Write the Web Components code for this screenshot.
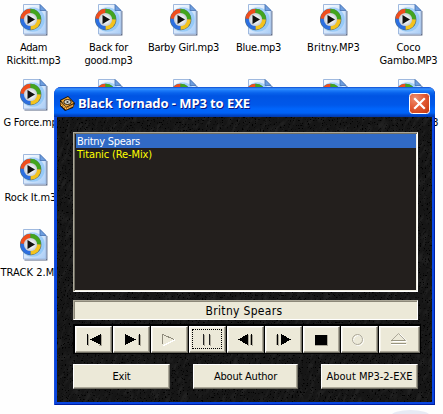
<!DOCTYPE html>
<html lang="en">
<head>
<meta charset="utf-8">
<title>Black Tornado - MP3 to EXE</title>
<style>
html,body{margin:0;height:100%;overflow:hidden;background:#fefefe}
body{font:11px/13px "DejaVu Sans Condensed","DejaVu Sans",sans-serif;color:#000}
</style>
</head>
<body>
<xp-desktop></xp-desktop>
<script>
const define=(name,html,setup)=>customElements.define(name,class extends HTMLElement{
  connectedCallback(){
    if(this.shadowRoot)return;
    const t=document.createElement('template');
    t.innerHTML=typeof html==='function'?html(this):html;
    this.attachShadow({mode:'open'}).append(t.content.cloneNode(true));
    if(setup)setup(this,this.shadowRoot);
  }
});

/* Text tracked to a given width in pixels */
define('fit-text','<style>:host{display:inline-block;white-space:nowrap}span{display:inline-block}</style><span><slot></slot></span>',(el,root)=>{
  const s=root.querySelector('span'),w=+el.getAttribute('w');
  if(!w)return;
  const n=el.textContent.length,natural=s.getBoundingClientRect().width;
  s.style.letterSpacing=((w-natural)/n)+'px';
});

define('mp3-file',`<style>
:host{display:flex;flex-direction:column;align-items:center;width:75px;height:75px;box-sizing:border-box;padding-top:4px;color:#000}
svg{display:block;flex:none}
.label{display:flex;flex-direction:column;align-items:center;padding-top:5px}
</style>
<svg width="30" height="32" viewBox="0.5 0 30 32">
<defs><linearGradient id="p" x1="0" y1="0" x2="1" y2="1"><stop offset="0" stop-color="#fbfdff"/><stop offset=".55" stop-color="#d3e5fb"/><stop offset="1" stop-color="#a9cdf6"/></linearGradient>
<radialGradient id="w"><stop offset=".3" stop-color="#fff"/><stop offset="1" stop-color="#c5cbd3"/></radialGradient></defs>
<path d="M6 31H28.3V7" fill="none" stroke="#53617f" stroke-width="1.2"/>
<path d="M5 .5H21.5L27.5 6.5V30H5Z" fill="url(#p)" stroke="#9fb9df"/>
<circle cx="14" cy="15.5" r="12.2" fill="#72bcf5" opacity=".55"/>
<path d="M21.5.5V6.5H27.5Z" fill="#6e9fe0" stroke="#456fae" stroke-width=".8"/>
<circle cx="12.2" cy="15.5" r="10.7" fill="#536b74"/>
<path d="M12 15V4.8A10.2 10.2 0 0 0 2 14.8Z" fill="#f04d1c"/>
<path d="M12 15V4.8A10.2 10.2 0 0 1 22.4 15.5Z" fill="#43a51e"/>
<path d="M12 15L2 14.8A10.2 10.2 0 0 0 12.2 25.7Z" fill="#2c6fe0"/>
<path d="M12 15L22.4 15.5A10.2 10.2 0 0 1 12.2 25.7Z" fill="#f5c31b"/>
<circle cx="12" cy="15.5" r="6.6" fill="url(#w)"/>
<path d="M9 11L16.5 15.5L9 20Z" fill="#111"/>
</svg><div class="label"><slot></slot></div>`);

const glyphs={
  prev:'<path d="M4 3h1v11H4zM18 3V14L7 8.5Z" fill="#000"/><path d="M5.5 4V14.5M18.5 4V14.5H16" stroke="#aca899" fill="none"/>',
  next:'<path d="M4 3V14L15 8.5ZM18 3h1v11h-1z" fill="#000"/><path d="M19.5 4V14.5M17.5 4V14" stroke="#aca899"/>',
  play:'<path d="M16.5 8.5L4.5 14.5" stroke="#fff" fill="none"/><path d="M3.5 13V3.5L15.5 8.5" stroke="#8f8b7c" fill="none"/>',
  pause:'<path d="M6 3h1v11H6zM12 3h1v11h-1z" fill="#222"/><path d="M7.5 3.5V14.5M13.5 3.5V14.5" stroke="#aca899"/>',
  back:'<path d="M13 3V14L3 8.5ZM16 3h1v11h-1z" fill="#000"/><path d="M13.5 4V14.5M15.5 4V14M17.5 4V14.5" stroke="#aca899"/>',
  step:'<path d="M4 3h1v11H4zM8 3V14L18 8.5Z" fill="#000"/><path d="M5.5 4V14.5M3.5 4V14" stroke="#aca899"/>',
  stop:'<path d="M4 4h13v11H4z" fill="#aca899"/><path d="M4 4h12v10H4z" fill="#000"/>',
  record:'<g shape-rendering="auto" fill="none"><circle cx="9.5" cy="9.5" r="5" stroke="#fff"/><circle cx="8.5" cy="8.5" r="5" stroke="#aca899"/></g>',
  eject:'<g shape-rendering="auto" fill="none"><path d="M5.5 10.5H19.5M13 3L20 10.5M4 13.5H19.5" stroke="#fff"/><path d="M4.5 9.5L11.5 2.5L18.5 9.5" stroke="#aca899"/><path d="M4 9.5H18.5M4 12.5H19" stroke="#98947f"/></g>'
};
define('xp-glyph',el=>`<style>:host{display:block;width:25px;height:17px}svg{display:block}</style><svg width="25" height="17" viewBox="0 0 25 17" shape-rendering="crispEdges">${glyphs[el.getAttribute('type')]}</svg>`);

define('transport-button',el=>`<style>
:host{display:block;width:37px;height:27px}
:host([wide]){width:41px}
div{position:relative;box-sizing:border-box;height:27px;background:#ece9d8;border:1px solid #fff;border-right-color:#716f64;border-bottom-color:#716f64;box-shadow:inset -1px -1px #aca899,inset 1px 1px #f7f5ec;padding:4px 0 0 7px}
:host([focused]) div::after{content:"";position:absolute;inset:2px 3px 3px 2px;border:1px dotted #000}
</style><div><xp-glyph type="${el.getAttribute('type')}"></xp-glyph></div>`);

define('push-button',`<style>
:host{display:block;height:25px}
button{display:flex;align-items:center;justify-content:center;width:100%;height:25px;box-sizing:border-box;margin:0;padding:0 0 1px;font:inherit;color:#000;background:#ece9d8;border:1px solid;border-color:#fff #716f64 #716f64 #fff;border-radius:0;box-shadow:inset -1px -1px #aca899}
</style><button><slot></slot></button>`);

define('title-bar',`<style>
:host{display:flex;align-items:center;height:30px;box-sizing:border-box;padding:2px 5px 0 5px;border-radius:7px 7px 0 0;color:#fff;
background:linear-gradient(#0a4bd0 0,#3d95ff 2px,#2080fb 3px,#0862ec 6px,#0054e3 9px,#0058ea 18px,#0065fc 22px,#0062f7 26px,#0048ca 28px,#0038ae 30px)}
.t{flex:1;padding-left:3px;font:bold 13px/18px "Noto Sans","Open Sans",sans-serif;text-shadow:1px 1px #0a1883}
svg{display:block}
</style>
<svg width="16" height="17" viewBox="0 0 16 17"><path d="M1 5L9 1L16 8L14 13L6 16L1 11Z" fill="#16110a"/><path d="M2 5.5L9 2L14.8 8L7 12Z" fill="#eda332"/><path d="M1.5 7L7 12.5L14.5 9V11.5L7 15L1.5 10Z" fill="#bd711d"/><path d="M2 7.5L6.5 12.5M2 10L7 14M8 13.6L14 10.5" stroke="#ffd36a" stroke-dasharray="1.5 1"/><ellipse cx="8.5" cy="7" rx="3.7" ry="2.5" fill="#d8d8cc" stroke="#32210b"/><circle cx="8.5" cy="7" r="1.1" fill="#333"/></svg>
<div class="t"><fit-text w="172">Black Tornado - MP3 to EXE</fit-text></div>
<svg width="21" height="21" viewBox="0 0 21 21"><defs><radialGradient id="r" cx=".3" cy=".25" r=".9"><stop stop-color="#ee8f70"/><stop offset=".5" stop-color="#e35b35"/><stop offset="1" stop-color="#c83b13"/></radialGradient></defs><rect x=".5" y=".5" width="20" height="20" rx="3" fill="url(#r)" stroke="#fff"/><path d="M6 6L15 15M15 6L6 15" stroke="#fff" stroke-width="2.2" stroke-linecap="square"/></svg>`);

define('track-list',`<style>
:host{display:block;height:160px;box-sizing:border-box;background:#231f1d;border:1px solid;border-color:#aca899 #fff #fff #aca899;box-shadow:inset 1px 1px #716f64,inset -1px -1px #f1efe2;padding:1px 1px 2px 2px;color:#ff0}
.row{height:13px;padding-left:1px}.sel{background:#316ac5;color:#fff;padding-top:1px}
</style><div class="row sel"><fit-text w="63">Britny Spears</fit-text></div><div class="row"><fit-text w="75">Titanic (Re-Mix)</fit-text></div>`);

define('player-window',`<style>
:host{display:block;width:381px;height:318px;background:#0845e0;border-radius:7px 7px 0 0;overflow:hidden;box-shadow:inset 1px 0 #1b4fd8,inset -1px -1px #001ea0}
.body{position:relative;box-sizing:border-box;margin:0 3px;height:285px;background:#161616;overflow:hidden}
.grain{position:absolute;left:0;top:0}
.stack{position:relative;display:flex;flex-direction:column;padding:15px 14px 0 16px}
.display{display:flex;align-items:center;justify-content:center;height:20px;box-sizing:border-box;margin-top:8px;background:#ece9d8;border:1px solid;border-color:#aca899 #fff #fff #aca899;box-shadow:inset 1px 1px #8d897a;font-size:12px;padding:2px 3px 0 0}
.transport{display:flex;gap:1px;width:348px;height:30px;box-sizing:border-box;background:#000;margin-top:4px;padding:2px 1px 1px 2px}
.actions{display:flex;justify-content:space-between;margin-top:10px}
</style>
<title-bar></title-bar>
<div class="body">
<svg class="grain" width="375" height="285"><defs><filter id="n" x="0" y="0" width="100%" height="100%" color-interpolation-filters="sRGB"><feTurbulence type="fractalNoise" baseFrequency=".28 .09" numOctaves="3" seed="7"/><feColorMatrix values="0 0 0 0 .2  0 0 0 0 .2  0 0 0 0 .2  3.5 0 0 0 -1.6"/></filter>
<filter id="d" x="0" y="0" width="100%" height="100%" color-interpolation-filters="sRGB"><feTurbulence type="fractalNoise" baseFrequency=".6" numOctaves="2" seed="3"/><feColorMatrix values="0 0 0 0 0  0 0 0 0 0  0 0 0 0 0  8 0 0 0 -5"/></filter></defs>
<g transform="translate(187 142) rotate(28)"><rect x="-260" y="-260" width="520" height="520" filter="url(#n)" opacity=".4"/></g><rect width="375" height="285" filter="url(#d)"/></svg>
<div class="stack">
<track-list></track-list>
<div class="display"><fit-text w="77">Britny Spears</fit-text></div>
<div class="transport"><transport-button type="prev"></transport-button><transport-button type="next"></transport-button><transport-button type="play"></transport-button><transport-button type="pause" focused></transport-button><transport-button type="back"></transport-button><transport-button type="step"></transport-button><transport-button type="stop"></transport-button><transport-button type="record"></transport-button><transport-button type="eject" wide></transport-button></div>
<div class="actions"><push-button style="width:97px"><fit-text w="18">Exit</fit-text></push-button><push-button style="width:105px"><fit-text w="63">About Author</fit-text></push-button><push-button style="width:97px"><fit-text w="86">About MP3-2-EXE</fit-text></push-button></div>
</div></div>`);

define('xp-desktop',`<style>
:host{display:block;position:relative;width:443px;height:414px;overflow:hidden;background:#fefefe}
.files{display:grid;grid-template-columns:repeat(6,75px);grid-auto-rows:75px;margin-left:-4px}
mp3-file.first{grid-column:1}
player-window{position:absolute;left:54px;top:87px}
.shade{position:absolute;left:391px;top:410px;width:39px;height:12px;border-radius:50%;background:#e7eaf4}
.tail{padding-left:54px}
</style>
<div class="files">
<mp3-file><fit-text w="27">Adam</fit-text><fit-text w="54">Rickitt.mp3</fit-text></mp3-file>
<mp3-file><fit-text w="39">Back for</fit-text><fit-text w="48">good.mp3</fit-text></mp3-file>
<mp3-file><fit-text w="71">Barby Girl.mp3</fit-text></mp3-file>
<mp3-file><fit-text w="45">Blue.mp3</fit-text></mp3-file>
<mp3-file><fit-text w="53">Britny.MP3</fit-text></mp3-file>
<mp3-file><fit-text w="24">Coco</fit-text><fit-text w="58">Gambo.MP3</fit-text></mp3-file>
<mp3-file><fit-text w="60">G Force.mp3</fit-text></mp3-file>
<mp3-file></mp3-file><mp3-file></mp3-file><mp3-file></mp3-file><mp3-file></mp3-file>
<mp3-file><fit-text class="tail">3</fit-text></mp3-file>
<mp3-file class="first"><fit-text w="58">Rock It.m3u</fit-text></mp3-file>
<mp3-file class="first"><fit-text w="66">TRACK 2.MP3</fit-text></mp3-file>
</div>
<div class="shade"></div>
<player-window></player-window>`);
</script>
</body>
</html>
